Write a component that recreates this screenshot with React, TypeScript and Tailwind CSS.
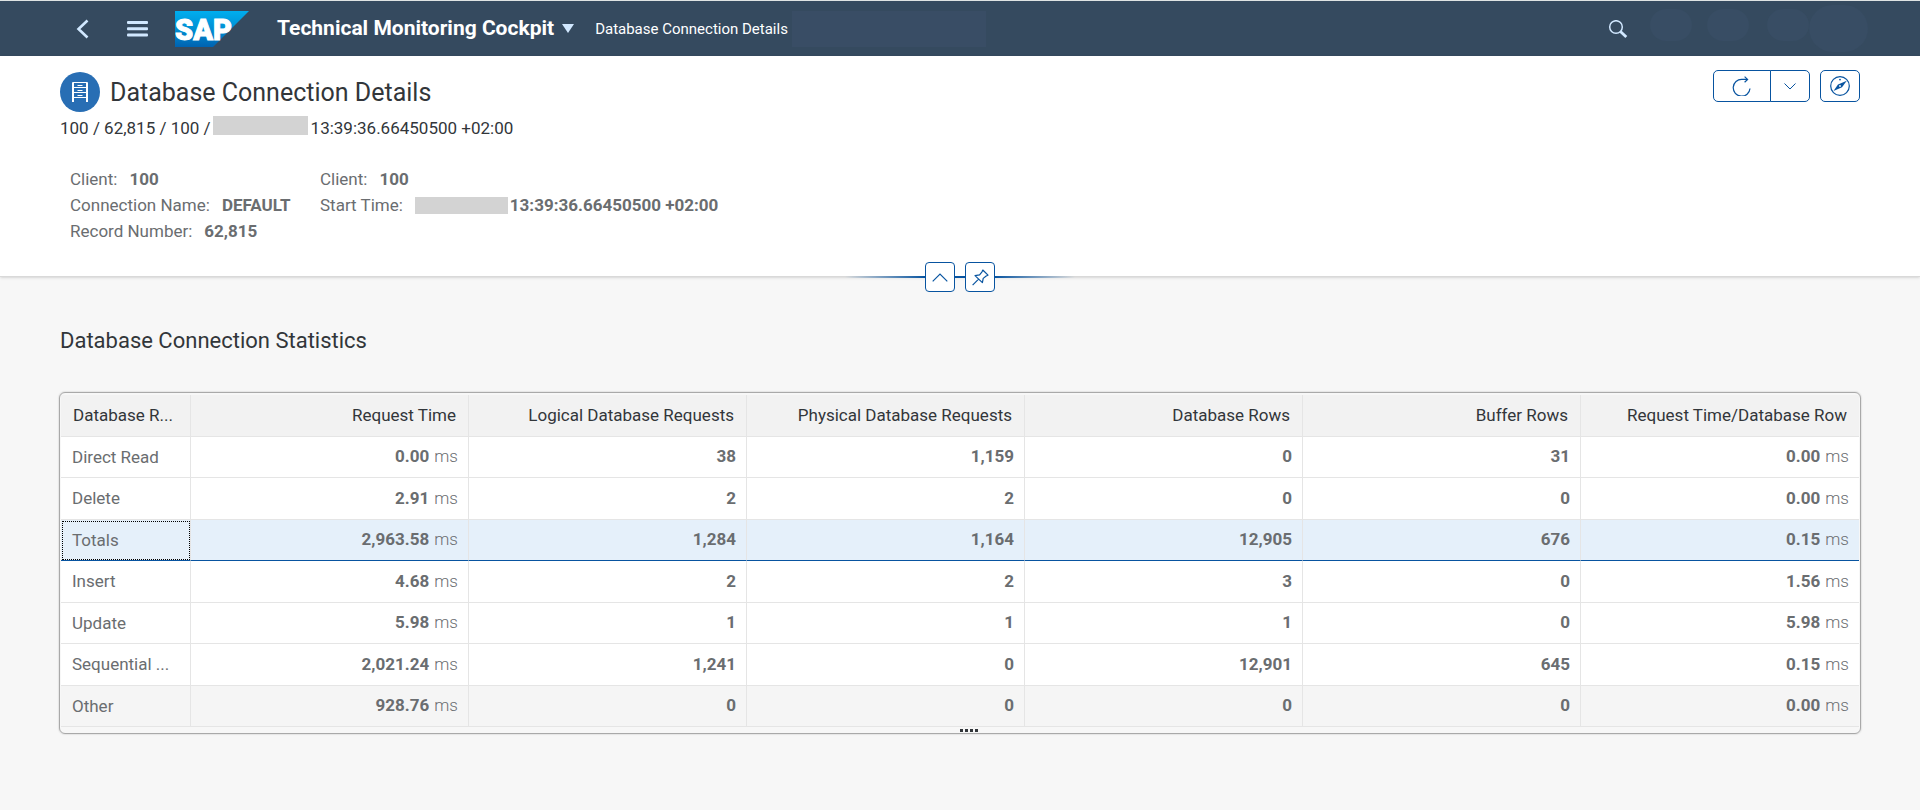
import type { ReactNode } from "react";

type Row = { name: string; values: string[] };

const columns = [
  "Request Time",
  "Logical Database Requests",
  "Physical Database Requests",
  "Database Rows",
  "Buffer Rows",
  "Request Time/Database Row",
];

const rows: Row[] = [
  { name: "Direct Read", values: ["0.00", "38", "1,159", "0", "31", "0.00"] },
  { name: "Delete", values: ["2.91", "2", "2", "0", "0", "0.00"] },
  { name: "Totals", values: ["2,963.58", "1,284", "1,164", "12,905", "676", "0.15"] },
  { name: "Insert", values: ["4.68", "2", "2", "3", "0", "1.56"] },
  { name: "Update", values: ["5.98", "1", "1", "1", "0", "5.98"] },
  { name: "Sequential ...", values: ["2,021.24", "1,241", "0", "12,901", "645", "0.15"] },
  { name: "Other", values: ["928.76", "0", "0", "0", "0", "0.00"] },
];

function SapLogo() {
  return (
    <svg width="74" height="36" viewBox="0 0 74 36" role="img" aria-label="SAP">
      <defs>
        <linearGradient id="sap" x1="0" y1="0" x2="0" y2="1">
          <stop offset="0" stopColor="#00aeef" />
          <stop offset="0.5" stopColor="#008fd3" />
          <stop offset="1" stopColor="#0062b1" />
        </linearGradient>
      </defs>
      <path d="M0 0H74L38 36H0Z" fill="url(#sap)" />
      <text x="0" y="29" fontFamily="Roboto, sans-serif" fontWeight="900" fontSize="29" fill="#fff" stroke="#fff" strokeWidth="1">
        SAP
      </text>
    </svg>
  );
}

function ShellBar() {
  return (
    <header className="flex h-14 items-center border-t border-[#dfe3e3] bg-[#354a5f] pr-[52px] pl-[60px] text-white">
      <button aria-label="Back" className="flex h-11 w-11 items-center justify-center">
        <svg width="14" height="20" viewBox="0 0 14 20" fill="none" stroke="#d1e8ff" strokeWidth="2.6">
          <path d="M12.5 1.5L3.5 10L12.5 18.5" />
        </svg>
      </button>
      <button aria-label="Menu" className="ml-[11px] flex h-11 w-11 items-center justify-center">
        <svg width="21" height="16" viewBox="0 0 21 16" fill="#d1e8ff">
          <rect width="21" height="3" rx="1" />
          <rect y="6.3" width="21" height="3" rx="1" />
          <rect y="12.6" width="21" height="3" rx="1" />
        </svg>
      </button>
      <a href="#home" className="ml-4">
        <SapLogo />
      </a>
      <button className="ml-7 flex items-center gap-2 pb-px text-[21px] leading-6 font-bold whitespace-nowrap">
        Technical Monitoring Cockpit
        <svg width="12" height="9" viewBox="0 0 12 9" fill="#d1e8ff">
          <path d="M0 0H12L6 9Z" />
        </svg>
      </button>
      <h1 className="ml-[21px] text-[15px] leading-6 whitespace-nowrap">Database Connection Details</h1>
      <div className="ml-1 h-9 w-[194px] bg-[#394d65]" />
      <button aria-label="Search" className="ml-auto flex h-11 w-11 items-center justify-center">
        <svg width="20" height="18" viewBox="0 0 20 18" fill="none" stroke="#d1e8ff">
          <circle cx="8" cy="7" r="6.3" strokeWidth="1.5" />
          <path d="M12.4 11.4L18.3 17" strokeWidth="2.8" />
        </svg>
      </button>
      <div className="ml-[10px] flex items-center pb-2">
        <span className="mr-[15px] h-8 w-[42px] rounded-full bg-[#384d64]" />
        <span className="mr-[18px] h-8 w-[42px] rounded-full bg-[#384d64]" />
        <span className="h-8 w-[42px] rounded-full bg-[#384d64]" />
      </div>
      <span className="h-[47px] w-[59px] rounded-full bg-[#384d64]" />
    </header>
  );
}

function Fact({ label, children }: { label: string; children: ReactNode }) {
  return (
    <div className="flex items-center gap-3">
      <dt>{label}:</dt>
      <dd className="flex items-center font-bold">{children}</dd>
    </div>
  );
}

const outline = "flex items-center justify-center border border-[#0854a0] bg-white text-[#0854a0]";

function ObjectHeader() {
  return (
    <section className="relative border-b border-[#d9d9d9] bg-white px-[60px] pt-4 pb-8 shadow-sm">
      <div className="flex justify-between">
        <div className="flex items-center gap-[10px]">
          <span className="flex h-10 w-10 items-center justify-center rounded-full bg-[#286eb4]">
            <svg width="16" height="20" viewBox="0 0 16 20" fill="none" stroke="#fff" strokeWidth="1">
              <path d="M0.5 20V0.5H15.5V20M1.5 20V1M14.5 20V1M1 5.5H15M1 10.5H15M1 15.5H15M5.5 3.5H10.5M5.5 8.5H10.5M5.5 13.5H10.5" />
            </svg>
          </span>
          <h2 className="pt-[2px] text-[25px] leading-8 text-[#32363a]">Database Connection Details</h2>
        </div>
        <div className="-mt-[2px] flex items-start gap-[10px]">
          <div className="flex">
            <button aria-label="Refresh" className={`${outline} h-8 w-[58px] rounded-l-[5px]`}>
              <svg width="20" height="20" viewBox="0 0 20 20" fill="none" stroke="currentColor" strokeWidth="1.2">
                <path d="M18 12.5A8.4 8.4 0 1 1 10 3.4H15.5M12.6 0.6L15.6 3.4L12.6 6.2" />
              </svg>
            </button>
            <button aria-label="More refresh options" className={`${outline} -ml-px h-8 w-10 rounded-r-[5px]`}>
              <svg width="12" height="7" viewBox="0 0 12 7" fill="none" stroke="currentColor" strokeWidth="1">
                <path d="M0.5 0.5L6 6L11.5 0.5" />
              </svg>
            </button>
          </div>
          <button aria-label="Navigate" className={`${outline} h-8 w-10 rounded-[5px]`}>
            <svg width="20" height="20" viewBox="0 0 20 20" fill="none" stroke="currentColor" strokeWidth="1.2">
              <circle cx="10" cy="10" r="9.3" />
              <path d="M3.5 15L8 8.6L16.8 4.8L12 11.2Z" fill="currentColor" stroke="none" />
              <circle cx="10" cy="10" r="0.9" fill="#fff" stroke="none" />
              <circle cx="10" cy="3.6" r="0.9" fill="currentColor" stroke="none" />
            </svg>
          </button>
        </div>
      </div>
      <p className="mt-1 flex text-[17px] leading-6 text-[#32363a]">
        100 / 62,815 / 100 /<span className="mr-[3px] ml-[2px] h-[19px] w-[95px] bg-[#d3d3d3]" />
        13:39:36.66450500 +02:00
      </p>
      <dl className="mt-[26px] flex gap-5 pl-[10px] text-[17px] leading-[26px] text-[#6a6d70]">
        <div className="min-w-[230px]">
          <Fact label="Client">100</Fact>
          <Fact label="Connection Name">DEFAULT</Fact>
          <Fact label="Record Number">62,815</Fact>
        </div>
        <div>
          <Fact label="Client">100</Fact>
          <Fact label="Start Time">
            <span className="mr-[2px] h-[17px] w-[93px] bg-[#d3d3d3]" />
            13:39:36.66450500 +02:00
          </Fact>
        </div>
      </dl>
      <div className="absolute inset-x-0 -bottom-4 flex items-center justify-center">
        <span className="h-[2px] w-20 bg-linear-to-r from-transparent to-[#0854a0]" />
        <button aria-label="Collapse header" className={`${outline} h-[30px] w-[30px] rounded-[4px]`}>
          <svg width="16" height="9" viewBox="0 0 16 9" fill="none" stroke="currentColor" strokeWidth="1.2">
            <path d="M0.7 8.3L8 1L15.3 8.3" />
          </svg>
        </button>
        <span className="h-[2px] w-[10px] bg-[#0854a0]" />
        <button aria-label="Pin header" className={`${outline} h-[30px] w-[30px] rounded-[4px]`}>
          <svg width="17" height="17" viewBox="0 0 17 17" fill="none" stroke="currentColor" strokeWidth="1.2" strokeLinejoin="round">
            <path d="M10.8 1L16 6.2L14.2 7L11.2 9.4L10.4 13.6L3 6.6L7.6 5.8L10 2.8ZM6.6 10.2L0.6 16.2" />
          </svg>
        </button>
        <span className="h-[2px] w-20 bg-linear-to-l from-transparent to-[#0854a0]" />
      </div>
    </section>
  );
}

function StatisticsTable() {
  return (
    <div className="-mx-px mt-[35px] rounded-[6px] border border-[#a9a9a9] bg-[#f7f7f7] px-px pt-[2px] shadow-[0_0_1px_1px_#e5e5e5]">
      <table className="w-full table-fixed border-separate border-spacing-0 text-[17px] leading-6">
        <thead>
          <tr className="h-[42px] bg-[#f2f2f2] text-[#32363a]">
            <th scope="col" className="w-[130px] border-r border-b border-[#e5e5e5] pb-[2px] pl-3 text-left font-normal whitespace-nowrap">
              Database R...
            </th>
            {columns.map((c) => (
              <th key={c} scope="col" className="border-r border-b border-[#e5e5e5] px-3 pb-[2px] text-right font-normal last:border-r-0">
                {c}
              </th>
            ))}
          </tr>
        </thead>
        <tbody className="text-[#6a6d70]">
          {rows.map((r) => {
            const selected = r.name === "Totals";
            const line = selected ? "border-b-[#0854a0]" : "border-b-[#e5e5e5]";
            return (
              <tr
                key={r.name}
                aria-selected={selected}
                className={`last:bg-[#f5f5f5] odd:h-[41px] even:h-[42px] ${selected ? "bg-[#e5f0fa]" : "bg-white"}`}
              >
                <td
                  className={`border-r border-b border-r-[#e5e5e5] pb-px pl-[11px] whitespace-nowrap ${line} ${
                    selected ? "outline-1 -outline-offset-2 outline-dotted outline-black" : ""
                  }`}
                >
                  {r.name}
                </td>
                {r.values.map((v, i) => (
                  <td key={columns[i]} className={`border-r border-b border-r-[#e5e5e5] px-[10px] pb-[2px] text-right last:border-r-0 ${line}`}>
                    <b>{v}</b>
                    {(i === 0 || i === 5) && <span className="pl-px font-light"> ms</span>}
                  </td>
                ))}
              </tr>
            );
          })}
        </tbody>
      </table>
      <div className="flex h-[6px] items-center justify-center gap-[2px] pl-[18px]" role="separator">
        <i className="h-[3px] w-[3px] bg-[#32363a]" />
        <i className="h-[3px] w-[3px] bg-[#32363a]" />
        <i className="h-[3px] w-[3px] bg-[#32363a]" />
        <i className="h-[3px] w-[3px] bg-[#32363a]" />
      </div>
    </div>
  );
}

export default function App() {
  return (
    <div className="min-h-screen bg-[#f7f7f7] font-['Roboto',sans-serif]">
      <ShellBar />
      <ObjectHeader />
      <main className="px-[60px] pt-12 pb-16">
        <h2 className="text-[22px] leading-8 text-[#32363a]">Database Connection Statistics</h2>
        <StatisticsTable />
      </main>
    </div>
  );
}
